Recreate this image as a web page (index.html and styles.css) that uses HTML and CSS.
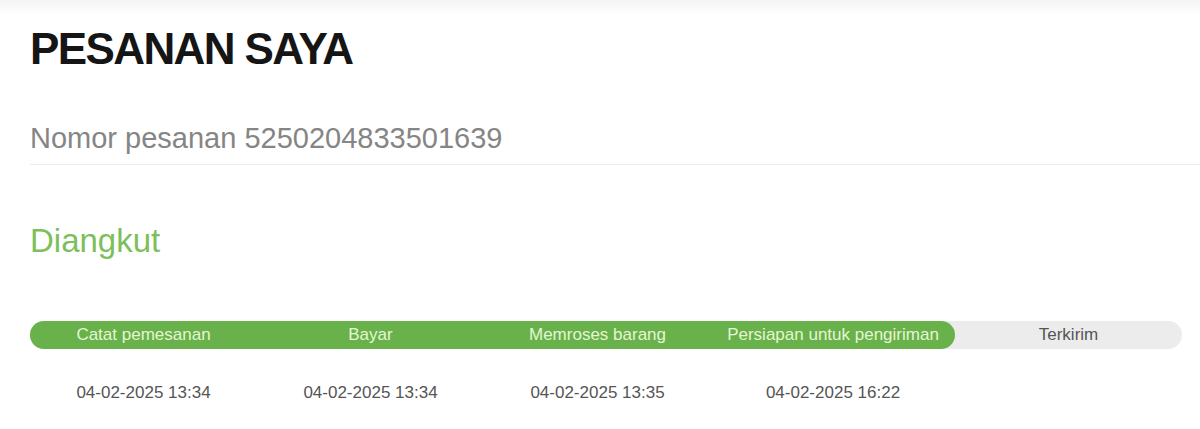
FILE: index.html
```html
<!DOCTYPE html>
<html lang="id">
<head>
    <meta charset="UTF-8">
    <meta name="viewport" content="width=device-width, initial-scale=1.0">
    <title>PESANAN SAYA</title>
    <link rel="stylesheet" href="styles.css">
</head>
<body>
    <div class="topbar"></div>
    <div class="container">
        <h1>PESANAN SAYA</h1>
        <div class="nomor">Nomor pesanan 5250204833501639</div>

        <h2 class="status">Diangkut</h2>

        <!-- Progres pesanan -->
        <div class="track">
            <div class="done">
                <span>Catat pemesanan</span>
                <span>Bayar</span>
                <span>Memroses barang</span>
                <span>Persiapan untuk pengiriman</span>
            </div>
            <div class="todo">
                <span>Terkirim</span>
            </div>
        </div>

        <div class="dates">
            <span>04-02-2025 13:34</span>
            <span>04-02-2025 13:34</span>
            <span>04-02-2025 13:35</span>
            <span>04-02-2025 16:22</span>
            <span></span>
        </div>
    </div>
</body>
</html>
```

FILE: styles.css
```css
body {
    font-family: 'Liberation Sans', Arial, sans-serif;
    margin: 0;
    padding: 0;
    background-color: #ffffff;
    color: #1a1a1a;
}

.topbar {
    height: 14px;
    background: linear-gradient(#f4f4f4, #ffffff);
}

.container {
    padding-left: 30px;
    padding-right: 18px;
}

h1 {
    margin: 9px 0 0 0;
    font-size: 44px;
    line-height: 52px;
    font-weight: bold;
    letter-spacing: -1.6px;
    color: #151515;
}

.nomor {
    margin-top: 45px;
    margin-right: -18px;
    padding-bottom: 8px;
    font-size: 29px;
    line-height: 36px;
    color: #858585;
    border-bottom: 1px solid #ebebeb;
}

.status {
    margin: 56px 0 0 0;
    font-size: 33px;
    line-height: 40px;
    font-weight: normal;
    color: #7cbf5c;
}

.track {
    display: flex;
    margin-top: 60px;
    height: 28px;
    background-color: #ececec;
    border-radius: 14px;
    font-size: 17px;
    line-height: 28px;
}

.done {
    display: grid;
    grid-template-columns: 227px 227px 227px 244px;
    background-color: #69b14b;
    border-radius: 14px;
    color: #e4f6d2;
    text-align: center;
    white-space: nowrap;
}

.todo {
    flex: 1;
    text-align: center;
    color: #555555;
}

.dates {
    display: grid;
    grid-template-columns: 227px 227px 227px 244px 1fr;
    margin-top: 32px;
    font-size: 17px;
    line-height: 24px;
    color: #555555;
    text-align: center;
}
```
